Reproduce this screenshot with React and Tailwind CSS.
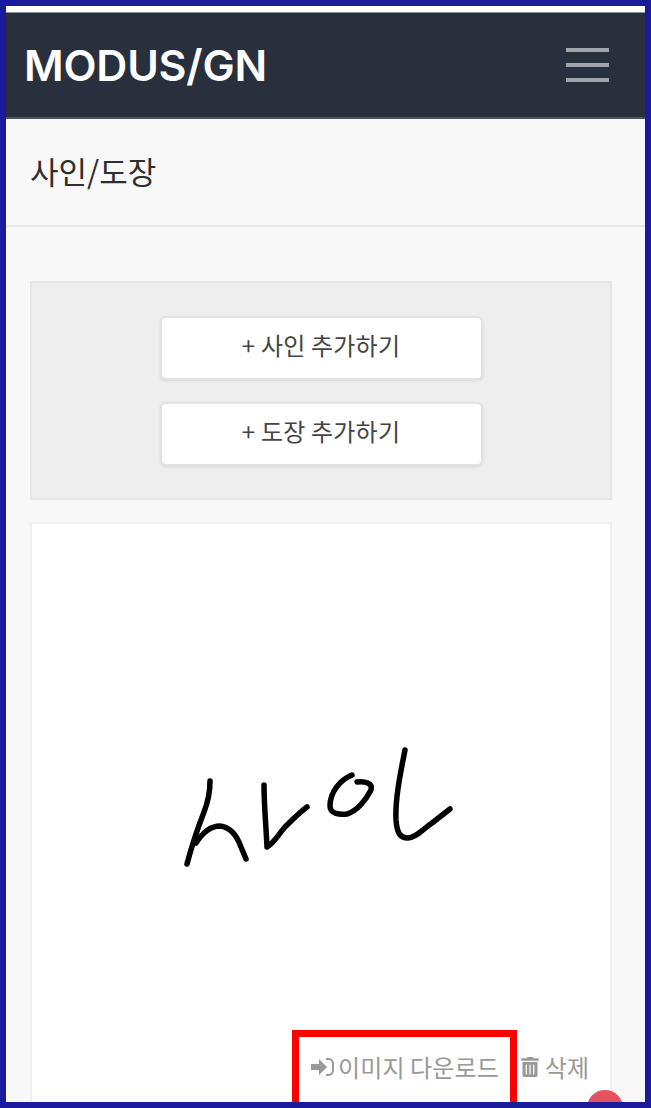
import { FaTrashAlt } from 'react-icons/fa';

const cjk = "font-['Noto_Sans_CJK_KR','Noto_Sans',sans-serif]";

const AddButton = ({ label }) => (
    <button className="w-[323px] h-[64px] flex items-center justify-center pb-[5px] bg-white border-2 border-[#e2e2e2] rounded-[6px] shadow-[0_1px_3px_rgba(0,0,0,0.1)] text-[24px] tracking-[0.2px] text-[#444444]">
        {label}
    </button>
);

const SignInIcon = () => (
    <svg width="23" height="18" viewBox="0 0 23 18" fill="none">
        <path d="M0 6h8V1l8 8-8 8v-5H0z" fill="#999999" />
        <path d="M15 1h2.500C20.500 1 22 3.500 22 6v6c0 2.500-1.500 5-4.500 5H15" stroke="#999999" strokeWidth="2" />
    </svg>
);

const Signature = () => (
    <svg width="320" height="150" viewBox="0 0 320 150" fill="none" stroke="#000000" strokeWidth="5.500" strokeLinecap="round" strokeLinejoin="round">
        <path d="M60 51C60 62 58 72 54 82C47 100 42 115 37 134" />
        <path d="M46 113C53 102 62 96 70 96C80 97 87 106 91 117L96 129" />
        <path d="M114 55C114 75 116 95 117 117C124 113 128 105 135 97C142 90 150 82 157 77" />
        <path d="M202 45C190 50 180 62 180 76C180 84 190 85 197 84C207 81 216 70 221 60C223 53 215 51 207 52" />
        <path d="M255 20C250 45 245 70 246 90C247 103 250 108 258 108C265 108 272 100 282 93L300 79" />
    </svg>
);

export default function App() {
    return (
        <div className={`relative h-[1108px] overflow-hidden border-[6px] border-[#1a1a9c] bg-[#f8f8f8] ${cjk}`}>
            {/* Top white strip */}
            <div className="h-[6px] bg-white" />

            {/* Navbar */}
            <div className="h-[107px] flex items-center justify-between bg-[#27303c] border-t border-[#8a9299] border-b-2 border-b-[#4b535e] pl-[18px] pr-[36px]">
                <span className="text-[43px] leading-none font-semibold text-white font-['Inter',sans-serif] tracking-[-0.2px]">MODUS/GN</span>
                <div className="flex flex-col gap-[11px]">
                    <div className="w-[43px] h-[4px] bg-[#a0a5ad]" />
                    <div className="w-[43px] h-[4px] bg-[#a0a5ad]" />
                    <div className="w-[43px] h-[4px] bg-[#a0a5ad]" />
                </div>
            </div>

            {/* Page title */}
            <div className="h-[108px] flex items-center pb-[2px] border-b-2 border-[#e6e6e6] pl-[24px]">
                <h1 className="text-[31px] text-[#2e2e2e]">사인/도장</h1>
            </div>

            <div className="pl-[24px] pr-[33px] pt-[54px]">
                {/* Add buttons */}
                <div className="h-[219px] flex flex-col items-center justify-center gap-[22px] bg-[#eeeeee] border-2 border-[#e6e6e6]">
                    <AddButton label="+ 사인 추가하기" />
                    <AddButton label="+ 도장 추가하기" />
                </div>

                {/* Signature card */}
                <div className="mt-[22px] h-[600px] bg-white border-2 border-[#f0f0f0]">
                    <div className="pl-[118px] pt-[206px]">
                        <Signature />
                    </div>
                    <div className="mt-[169px] flex justify-end items-center gap-[22px] pr-[21px] text-[24px] text-[#999999]">
                        <span className="flex items-center gap-[4px] tracking-[0.1px]"><SignInIcon />이미지 다운로드</span>
                        <span className="flex items-center gap-[6px]"><FaTrashAlt className="w-[18px] h-[20px] text-[#999999]" />삭제</span>
                    </div>
                </div>
            </div>

            {/* Highlight box */}
            <div className="absolute left-[286px] top-[1024px] w-[225px] h-[90px] border-[7px] border-[#ff0000]" />

            {/* Notification badge */}
            <div className="absolute left-[581px] top-[1084px] w-[36px] h-[36px] rounded-full bg-[#e8525f] text-white text-[22px] font-bold flex justify-center leading-[36px]">1</div>
        </div>
    );
}
